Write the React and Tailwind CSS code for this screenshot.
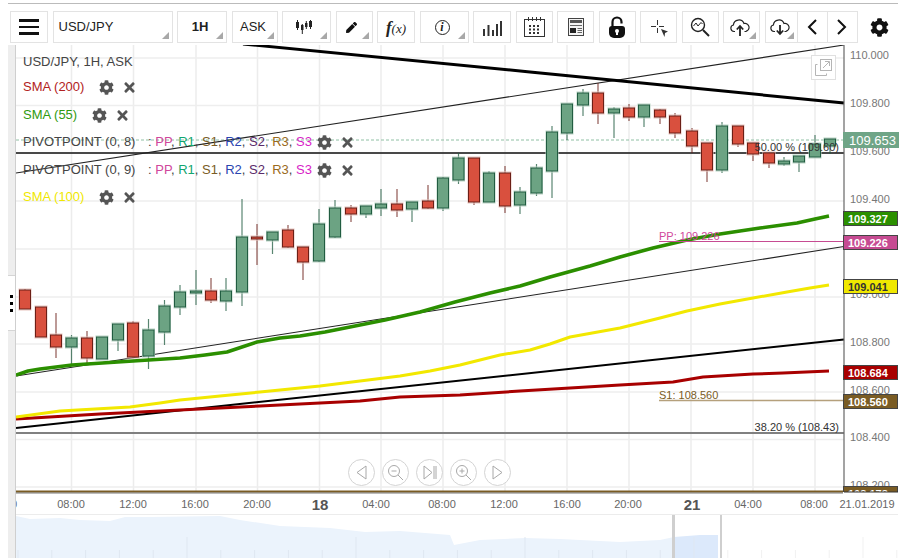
import React from "react";
import { FaCog, FaTimes, FaPen } from "react-icons/fa";

// x, top, bottom, wickTop, wickBottom, up
const candles = [
  [25, 290, 309, 289, 309, 0], [41, 307, 337, 307, 337, 0], [56, 335, 347, 313, 358, 0],
  [71.5, 338, 347, 335, 365, 1], [87, 338, 358, 331, 363, 0], [102, 337, 359, 337, 359, 1],
  [118, 324, 340, 324, 351, 1], [133, 323, 357, 321, 358, 0], [148.5, 330, 356, 319, 369, 1],
  [164.5, 306, 332, 300, 345, 1], [180, 292, 307, 285, 315, 1], [196, 291, 293, 270, 305, 1],
  [211, 291, 300, 278, 303, 0], [226, 291, 301, 278, 311, 1], [242, 237, 292, 199, 306, 1],
  [257, 237, 239, 224, 265, 0], [272.5, 232, 240, 232, 254, 1], [288, 230, 247, 225, 248, 0],
  [303, 247, 262, 247, 280, 0], [319, 224, 261, 209, 262, 1], [335, 208, 237, 200, 238, 1],
  [351, 208, 214, 205, 222, 0], [366, 206, 214, 206, 218, 1], [381, 204, 208, 189, 216, 1],
  [397, 204, 210, 189, 217, 0], [412, 202, 209, 202, 222, 1], [428, 201, 208, 185, 209, 0],
  [443, 178, 208, 177, 211, 1], [458.5, 158, 180, 153, 184, 1], [474, 158, 202, 158, 205, 0],
  [489, 173, 202, 171, 202, 1], [505, 173, 206, 166, 213, 0], [520, 192, 205, 187, 214, 1],
  [536.5, 168, 193, 164, 196, 1], [552, 132, 171, 126, 198, 1], [567, 104, 133, 104, 140, 1],
  [583, 93, 105, 89, 116, 1], [598, 93, 113, 83, 124, 0], [614, 109, 113, 107, 138, 1],
  [629, 108, 117, 104, 121, 0], [644, 105, 117, 105, 127, 1], [660, 110, 117, 109, 124, 0],
  [675, 116, 133, 113, 138, 0], [692, 131, 146, 128, 153, 0], [707, 143, 170, 143, 182, 0],
  [722, 126, 170, 122, 173, 1], [738, 126, 144, 126, 147, 0], [753, 143, 154, 143, 161, 0],
  [769, 153, 163, 152, 168, 0], [784, 161, 164, 157, 166, 1], [799, 156, 162, 156, 172, 1],
  [815, 144, 157, 135, 157, 1], [830, 139, 146, 139, 154, 1],
];

const gridX = [71.5, 133.5, 196, 257.5, 319.5, 381, 443, 505, 567, 629, 691, 753, 815];
const gridY = [58, 105.5, 153, 201, 249, 297, 344, 392, 439.5, 487];

const axis = [
  ["110.000", 59], ["109.800", 107], ["109.600", 155], ["109.400", 203], ["109.200", 250],
  ["109.000", 298], ["108.800", 346], ["108.600", 394], ["108.400", 441], ["108.200", 489],
];

const badges = [
  ["109.327", 211, "#2b8f00", "#ffffff"], ["109.226", 235, "#c64b92", "#ffffff"],
  ["109.041", 279, "#f0e800", "#333333"], ["108.684", 365, "#a80000", "#ffffff"],
  ["108.560", 394, "#7a5c24", "#ffffff"], ["108.178", 486, "#7a5c24", "#ffffff"],
];

const timeLabels = [
  ["0", 14], ["08:00", 71], ["12:00", 133], ["16:00", 195], ["20:00", 257], ["04:00", 376],
  ["08:00", 442], ["12:00", 504], ["16:00", 567], ["20:00", 628], ["04:00", 748], ["08:00", 814],
  ["21.01.2019", 867],
];

const sma55 = "16,375 28,371 40,369 72,365 133,361 180,358 205,355 227,352 242,347 257,342 280,338 300,336 325,332 350,327 385,320 420,312 455,302 490,293 520,286 550,277 590,266 620,257 653,248 687,240 720,234 760,228 797,223 815,219 829,216";
const sma100 = "16,417 60,411 130,407 160,403 180,400 220,396 260,392 320,386 360,381 400,376 430,371 460,365 500,355 530,350 550,344 570,337 620,328 660,318 687,311 720,304 753,298 787,292 810,288 829,285";
const sma200 = "16,419 100,414 200,409 260,406 320,403 360,401 400,397 460,395 520,391 570,388 620,385 673,382 703,377 753,374 783,373 829,371";
const navArea = "16,558 16,516 30,519 60,518 80,520 110,521 125,517 150,517 220,516 240,520 280,526 330,528 365,532 400,531 450,535 454,545 480,540 525,538 560,539 620,542 660,540 674,537 700,535 718,535 718,558";

const navTicks = [];
for (let x = 18; x < 900; x += 33.8) navTicks.push(x);

const pivots = [
  ["PP", "#d0479c"], ["R1", "#12a56f"], ["S1", "#7a5c24"], ["R2", "#2a45b0"],
  ["S2", "#5a2a6a"], ["R3", "#9a6a20"], ["S3", "#d81fc8"],
];

function ToolButton({ width, corner, noRight, children }) {
  return (
    <div
      className={`relative flex h-[32px] shrink-0 items-center justify-center border border-[#e3e3e3] text-[13px] text-[#222] ${noRight ? "border-r-0" : ""}`}
      style={{ width }}
    >
      {children}
      {corner && (
        <svg className="absolute bottom-[3px] right-[3px]" width="7" height="7" viewBox="0 0 7 7">
          <polygon points="7,0 7,7 0,7" fill="#a8a8a8" />
        </svg>
      )}
    </div>
  );
}

function CloudIcon({ down }) {
  return (
    <svg className="mr-[3px]" width="20" height="18" viewBox="0 0 20 18" fill="none" stroke="#222">
      <path d="M5 13.500H4a3.300 3.300 0 0 1-.6-6.500 5.500 5.500 0 0 1 10.600-1.500 4 4 0 0 1 2 7.800l-1.500.2" strokeWidth="1.200" />
      {down ? (
        <path d="M10 7v8M6.800 12.500 10 16l3.200-3.500" strokeWidth="1.800" />
      ) : (
        <path d="M10 18V9M6.800 11.500 10 8l3.200 3.500" strokeWidth="1.800" />
      )}
    </svg>
  );
}

function LegendActions() {
  return (
    <div className="flex items-center gap-[8px] text-[#555]">
      <FaCog size={15} />
      <FaTimes size={15} />
    </div>
  );
}

function PivotRow({ label, className }) {
  return (
    <div className={`flex h-[20px] items-center ${className}`}>
      <span className="w-[125px] text-[#444]">{label}</span>
      <span className="whitespace-pre text-[#444]">
        {": "}
        {pivots.map(([name, color], i) => (
          <span key={name}>
            <span style={{ color }}>{name}</span>
            {i < pivots.length - 1 ? ", " : ""}
          </span>
        ))}
      </span>
      <div className="ml-[5px]">
        <LegendActions />
      </div>
    </div>
  );
}

function RoundButton({ children }) {
  return (
    <div className="flex h-[27px] w-[27px] items-center justify-center rounded-full border border-[#d4d4d4] bg-white">
      <svg width="17" height="17" viewBox="0 0 17 17" fill="none" stroke="#a8a8a8" strokeWidth="1">
        {children}
      </svg>
    </div>
  );
}

export default function App() {
  return (
    <div className="h-[558px] w-[908px] overflow-hidden bg-white font-['Liberation_Sans',Arial,sans-serif]">
      <div className="ml-[8px] mt-[3px] h-[1px] w-[890px] bg-[#bbbbbb]" />

      {/* toolbar */}
      <div className="ml-[10px] mt-[7px] flex h-[34px] items-start gap-[4.5px]">
        <ToolButton width={38}>
          <div className="flex flex-col gap-[4px]">
            <div className="h-[2.5px] w-[20px] bg-[#111]" />
            <div className="h-[2.5px] w-[20px] bg-[#111]" />
            <div className="h-[2.5px] w-[20px] bg-[#111]" />
          </div>
        </ToolButton>
        <ToolButton width={120} corner>
          <span className="w-full pl-[5px]">USD/JPY</span>
        </ToolButton>
        <ToolButton width={50} corner>
          <span className="pr-[4px] font-bold">1H</span>
        </ToolButton>
        <ToolButton width={46} corner>
          <span className="pr-[3px]">ASK</span>
        </ToolButton>
        <ToolButton width={49} corner>
          <svg className="mr-[5px]" width="18" height="14" viewBox="0 0 18 14" fill="#222">
            <rect x="1" y="2" width="3" height="6" />
            <rect x="2" y="0" width="1" height="10" />
            <rect x="6" y="5" width="2.500" height="5" />
            <rect x="6.800" y="4" width="1" height="10" />
            <rect x="10" y="3" width="2.500" height="4" />
            <rect x="10.800" y="1" width="1" height="8" />
            <rect x="14" y="1" width="3" height="6" />
            <rect x="15" y="0" width="1" height="9" />
          </svg>
        </ToolButton>
        <ToolButton width={37} corner>
          <FaPen size={11} className="mr-[5px] text-[#111]" />
        </ToolButton>
        <ToolButton width={38}>
          <span className="font-['Liberation_Serif',serif] italic leading-none text-[#222]">
            <span className="text-[17px] font-bold">f</span>
            <span className="text-[13px]">(x)</span>
          </span>
        </ToolButton>
        <ToolButton width={49} corner>
          <div className="mr-[4px] flex h-[15px] w-[15px] items-center justify-center rounded-full border border-[#222] font-['Liberation_Serif',serif] text-[12px] font-bold italic leading-none">
            i
          </div>
        </ToolButton>
        <ToolButton width={38}>
          <svg className="mt-[2px]" width="19" height="16" viewBox="0 0 19 16" fill="#333">
            <rect x="0" y="9" width="2" height="7" />
            <rect x="4.500" y="5" width="2" height="11" />
            <rect x="9" y="10" width="2" height="6" />
            <rect x="13" y="4" width="2" height="12" />
            <rect x="17" y="1" width="2" height="15" />
          </svg>
        </ToolButton>
        <ToolButton width={37}>
          <svg width="21" height="20" viewBox="0 0 21 20" fill="none" stroke="#333">
            <rect x="0.500" y="2.500" width="20" height="17" />
            <path d="M4.500 0v4M8.500 0v4M12.500 0v4M16.500 0v4" />
            <path
              d="M5 8h2v2H5zM9 8h2v2H9zM13 8h2v2h-2zM5 11.500h2v2H5zM9 11.500h2v2H9zM13 11.500h2v2h-2zM5 15h2v2H5zM9 15h2v2H9zM13 15h2v2h-2z"
              fill="#333"
              stroke="none"
            />
          </svg>
        </ToolButton>
        <ToolButton width={37}>
          <svg width="16" height="18" viewBox="0 0 16 18" fill="none">
            <rect x="0.500" y="0.500" width="15" height="17" fill="#f4f4f4" stroke="#444" />
            <rect x="2" y="2" width="12" height="3" fill="#555" />
            <rect x="2" y="10" width="6" height="5" fill="#222" />
            <path d="M2 7.500h12M9.500 10.500h4.500M9.500 12.500h4.500M9.500 14.500h4.500" stroke="#666" />
          </svg>
        </ToolButton>
        <ToolButton width={37}>
          <svg width="16" height="22" viewBox="0 0 16 22" fill="#111">
            <path d="M3.500 11V6a4.500 4.500 0 0 1 9 0v1.500" fill="none" stroke="#111" strokeWidth="2.200" />
            <path d="M3 10h10a3 3 0 0 1 3 3v4a5 5 0 0 1-5 5H5a5 5 0 0 1-5-5v-4a3 3 0 0 1 3-3z" />
            <circle cx="8" cy="15" r="2" fill="#fff" />
            <rect x="7" y="15" width="2" height="4" fill="#fff" />
          </svg>
        </ToolButton>
        <ToolButton width={37}>
          <svg className="ml-[2px] mt-[2px]" width="18" height="17" viewBox="0 0 18 17" fill="#333">
            <path d="M6.500 0v5M6.500 8v5M0 6.500h5M8 6.500h5" stroke="#333" strokeWidth="1" fill="none" />
            <polygon points="10,9 17,11.500 14,13 13.500,17 " />
          </svg>
        </ToolButton>
        <ToolButton width={37}>
          <svg width="20" height="20" viewBox="0 0 20 20" fill="none" stroke="#222">
            <circle cx="8" cy="8" r="6.500" strokeWidth="1.400" />
            <path d="M3.500 9l2.500-3 2 3 3-3.500 1.500 1.500" strokeWidth="1" />
            <path d="M13 13l6 6" strokeWidth="2" />
          </svg>
        </ToolButton>
        <ToolButton width={37} corner>
          <CloudIcon />
        </ToolButton>
        <ToolButton width={32} corner noRight>
          <CloudIcon down />
        </ToolButton>
        <div className="-ml-[4.500px] flex h-[32px] w-[61px] shrink-0 border border-[#e3e3e3]">
          <div className="flex flex-1 items-center justify-center border-r border-[#e3e3e3]">
            <svg width="10" height="16" viewBox="0 0 10 16" fill="none" stroke="#111" strokeWidth="2">
              <polyline points="9,1 2,8 9,15" />
            </svg>
          </div>
          <div className="flex flex-1 items-center justify-center">
            <svg width="10" height="16" viewBox="0 0 10 16" fill="none" stroke="#111" strokeWidth="2">
              <polyline points="1,1 8,8 1,15" />
            </svg>
          </div>
        </div>
        <div className="ml-[8px] mt-[7px] text-[#111]">
          <FaCog size={19} />
        </div>
      </div>

      <div className="ml-[8px] flex h-[514px]">
        {/* left rail */}
        <div className="flex w-[8px] shrink-0 flex-col border-r border-[#cfcfcf] bg-[#eeeeee]">
          <div className="mt-[230px] flex h-[56px] flex-col items-center justify-center gap-[4px] border-y border-[#d5d5d5] bg-white">
            <div className="h-[3px] w-[3px] bg-black" />
            <div className="h-[3px] w-[3px] bg-black" />
            <div className="h-[3px] w-[3px] bg-black" />
          </div>
        </div>

        <div className="relative w-[892px]">
          {/* main chart */}
          <svg className="block" width="892" height="469" viewBox="16 45 892 469" fontFamily="Liberation Sans, Arial, sans-serif">
            {gridX.map((x) => (
              <line key={x} x1={x} x2={x} y1="45" y2="492" stroke="#ececec" strokeWidth="1.500" />
            ))}
            {gridY.map((y) => (
              <line key={y} x1="16" x2="844" y1={y} y2={y} stroke="#eeeeee" strokeWidth="1.500" />
            ))}

            <line x1="16" x2="844" y1="140" y2="140" stroke="#8fc0a4" strokeDasharray="3 2" />
            <line x1="16" x2="844" y1="153" y2="153" stroke="#111" strokeWidth="1.300" />
            <line x1="16" x2="844" y1="433" y2="433" stroke="#808080" strokeWidth="1.800" />
            <line x1="16" y1="173" x2="844" y2="45" stroke="#222" strokeWidth="1.100" />
            <line x1="16" y1="376" x2="844" y2="246.500" stroke="#222" strokeWidth="1.100" />
            <polyline points="243,44 530,72 844,103" fill="none" stroke="#000" strokeWidth="3" />

            {candles.map(([x, top, bottom, wickTop, wickBottom, up]) => {
              const dark = up ? "#215c41" : "#6b1f17";
              const fill = up ? "#6ca383" : "#d9503e";
              const halo = up ? "#b9d3c4" : "#e8c4bd";
              return (
                <g key={x}>
                  <line x1={x} x2={x} y1={wickTop} y2={wickBottom} stroke={dark} strokeOpacity="0.75" strokeWidth="1.200" />
                  <rect x={x - 6} y={top - 1} width="12" height={bottom - top + 2} fill="none" stroke={halo} />
                  <rect x={x - 5.500} y={top} width="11" height={bottom - top} fill={fill} stroke={dark} />
                </g>
              );
            })}

            <line x1="16" y1="428" x2="844" y2="339.500" stroke="#000" strokeWidth="2" />
            <polyline points={sma200} fill="none" stroke="#a80000" strokeWidth="3" strokeLinejoin="round" />
            <polyline points={sma100} fill="none" stroke="#f2e800" strokeWidth="3" strokeLinejoin="round" />
            <polyline points={sma55} fill="none" stroke="#2b8f00" strokeWidth="3.500" strokeLinejoin="round" />

            <line x1="659" x2="844" y1="241.500" y2="241.500" stroke="#c64b92" />
            <line x1="659" x2="844" y1="400.500" y2="400.500" stroke="#b5a07c" strokeWidth="1.500" />
            <text x="659" y="240" fontSize="11" fill="#d0479c">PP: 109.226</text>
            <text x="659" y="399" fontSize="11" fill="#7a5c24">S1: 108.560</text>
            <text x="839" y="151" textAnchor="end" fontSize="11" fill="#333">50.00 % (109.60)</text>
            <text x="839" y="431" textAnchor="end" fontSize="11" fill="#333">38.20 % (108.43)</text>

            <line x1="16" x2="844" y1="491.500" y2="491.500" stroke="#7a5c24" strokeWidth="2" />
            <line x1="16" x2="844" y1="493" y2="493" stroke="#555" strokeWidth="0.800" />
            <line x1="844" x2="844" y1="45" y2="493" stroke="#666" strokeWidth="1.200" />

            {axis.map(([label, y]) => (
              <text key={label} x="850" y={y} fontSize="11" fill="#777">{label}</text>
            ))}

            <rect x="843" y="132" width="56" height="16" fill="#6fa587" />
            <text x="849" y="145" fontSize="13" fill="#fff">109.653</text>
            {badges.map(([label, y, bg, color]) => (
              <g key={label}>
                <rect x="843.500" y={y + 0.500} width="54" height="14" fill={bg} stroke="#444" />
                <text x="848" y={y + 11.500} fontSize="11" fontWeight="700" fill={color}>{label}</text>
              </g>
            ))}
            <rect x="843" y="492" width="65" height="22" fill="#fff" />
            <line x1="844" x2="898" y1="492" y2="492" stroke="#333" />

            {timeLabels.map(([label, x]) => (
              <text key={label + x} x={x} y="508" textAnchor="middle" fontSize="11" fill="#666">{label}</text>
            ))}
            <text x="320" y="510" textAnchor="middle" fontSize="15" fontWeight="700" fill="#555">18</text>
            <text x="692" y="510" textAnchor="middle" fontSize="15" fontWeight="700" fill="#555">21</text>
          </svg>

          {/* legend over the chart */}
          <div className="absolute left-[7px] top-[7px] flex flex-col text-[13px]">
            <div className="flex h-[20px] items-center text-[#444]">USD/JPY, 1H, ASK</div>
            <div className="mt-[5px] flex h-[20px] items-center gap-[15px] text-[#b22222]">
              SMA (200)
              <LegendActions />
            </div>
            <div className="mt-[8px] flex h-[20px] items-center gap-[15px] text-[#2f9a0e]">
              SMA (55)
              <LegendActions />
            </div>
            <PivotRow label="PIVOTPOINT (0, 8)" className="mt-[7px]" />
            <PivotRow label="PIVOTPOINT (0, 9)" className="mt-[8px]" />
            <div className="mt-[7px] flex h-[20px] items-center gap-[15px] text-[#f0e800]">
              SMA (100)
              <LegendActions />
            </div>
          </div>

          {/* popout button */}
          <div className="absolute left-[795px] top-[10px] flex h-[25px] w-[25px] items-center justify-center border border-[#e0e0e0] bg-white">
            <svg width="17" height="17" viewBox="0 0 17 17" fill="none" stroke="#b5b5b5">
              <rect x="5.500" y="0.500" width="11" height="11" />
              <path d="M2.500 5.500H0.500v11h11v-2" />
              <path d="M8 9l6-6M10 2.500h4.500V7" />
            </svg>
          </div>

          {/* chart navigation */}
          <div className="absolute left-[332px] top-[414px] flex gap-[7px]">
            <RoundButton>
              <polygon points="13,2 13,15 4,8.500" />
            </RoundButton>
            <RoundButton>
              <circle cx="7" cy="7" r="5.500" />
              <path d="M4.500 7h5M11 11l5 5" />
            </RoundButton>
            <RoundButton>
              <polygon points="3,2 3,15 11,8.500" />
              <path d="M13 2v13M15 2v13" />
            </RoundButton>
            <RoundButton>
              <circle cx="7" cy="7" r="5.500" />
              <path d="M4.500 7h5M7 4.500v5M11 11l5 5" />
            </RoundButton>
            <RoundButton>
              <polygon points="4,2 4,15 13,8.500" />
            </RoundButton>
          </div>

          {/* navigator */}
          <svg className="block" width="882" height="44" viewBox="16 514 882 44">
            <line x1="16" x2="898" y1="514.500" y2="514.500" stroke="#ececec" />
            <polygon points={navArea} fill="#ebf3fc" />
            <rect x="674" y="515" width="45" height="43" fill="#ffffff" />
            <polygon points="674,558 674,537 700,535 718,535 718,558" fill="#dce9fb" />
            {navTicks.map((x, i) => (
              <line
                key={x}
                x1={x}
                x2={x}
                y1={i % 5 === 0 && i > 0 ? 537 : 550}
                y2="558"
                stroke={x > 720 ? "#f1f1f1" : "#dfe7f1"}
              />
            ))}
            <rect x="672" y="515" width="3" height="43" fill="#cfcfcf" />
            <rect x="720" y="515" width="2" height="43" fill="#cfcfcf" />
          </svg>
        </div>
      </div>
    </div>
  );
}
